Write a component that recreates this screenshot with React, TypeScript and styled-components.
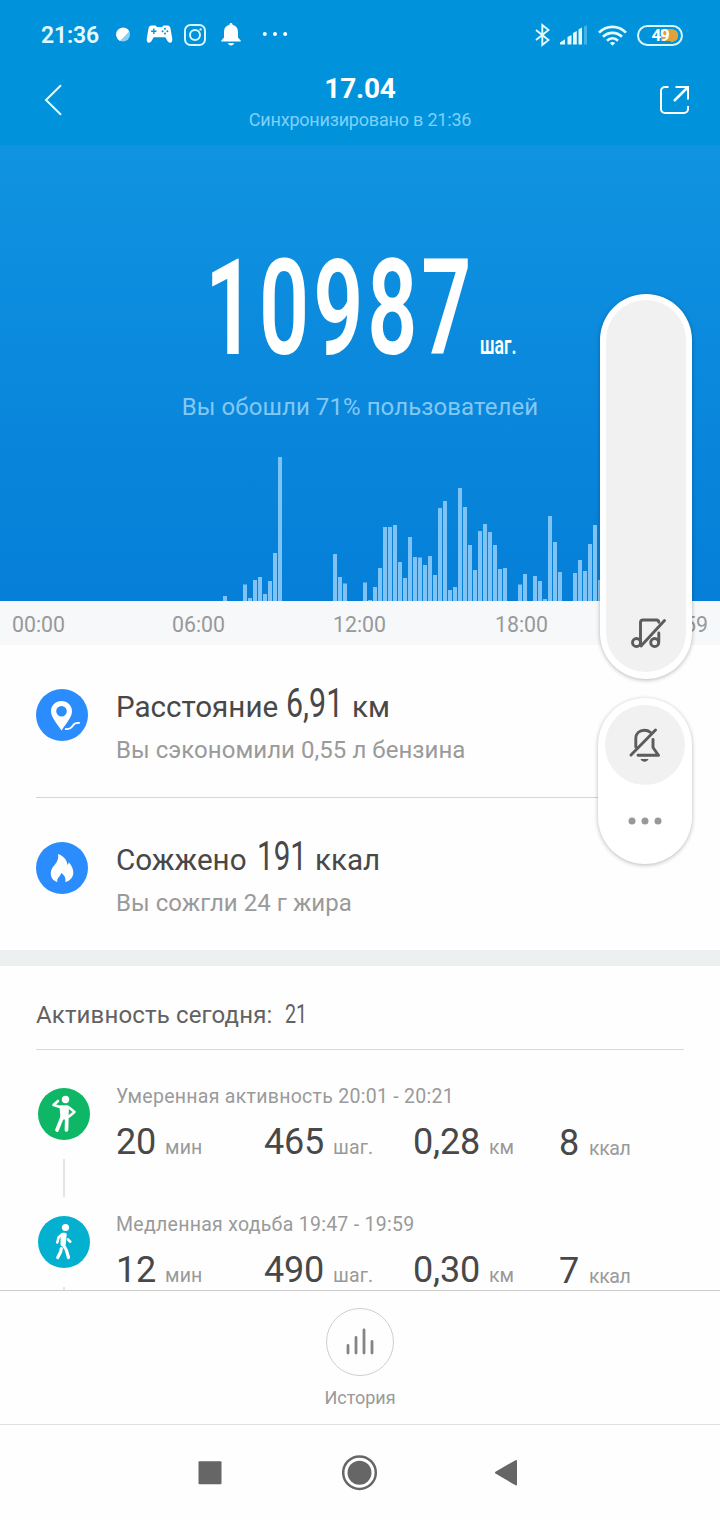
import React from "react";
import styled, { createGlobalStyle } from "styled-components";

const GlobalStyle = createGlobalStyle`
  * { box-sizing: border-box; }
  body { margin: 0; background: #fff; font-family: Roboto, "Noto Sans", sans-serif; }
  svg { display: block; flex: none; }
`;

const Screen = styled.main`
  position: relative;
  display: flex;
  flex-direction: column;
  width: 720px;
  height: 1520px;
  overflow: hidden;
  background: #fefefe;
  white-space: nowrap;
`;

const Header = styled.header`
  flex: none;
  height: 145px;
  background: #0092db;
  color: #fff;
`;

const StatusBar = styled.div`
  display: flex;
  align-items: center;
  height: 70px;
  padding: 0 37px 0 41px;
  color: #e2fbff;
`;

const Clock = styled.span`
  width: 74px;
  padding-top: 1px;
  font-size: 23px;
  font-weight: 600;
  line-height: 30px;
  letter-spacing: -0.2px;
`;

const StatusIcons = styled.div`
  display: grid;
  grid-template-columns: 31px 38px 37px 41px 26px;
  align-items: center;
`;

const SystemIcons = styled.div`
  display: flex;
  align-items: center;
  gap: 10px;
  margin-left: auto;
`;

const TitleBar = styled.div`
  display: flex;
  justify-content: space-between;
  height: 75px;
  padding: 0 30px 0 44px;
`;

const IconButton = styled.button<{ $top: number }>`
  display: flex;
  align-items: flex-start;
  width: 30px;
  padding: ${(p) => p.$top}px 0 0;
  border: 0;
  background: none;
  color: #e2fbff;
`;

const TitleStack = styled.div`
  display: flex;
  flex-direction: column;
  align-items: center;
  padding: 4px 14px 0 0;
`;

const Title = styled.h1`
  margin: 0;
  font-size: 28px;
  font-weight: 700;
  line-height: 30px;
  letter-spacing: -0.2px;
`;

const Synced = styled.p`
  margin: 5px 0 0;
  font-size: 18px;
  line-height: 22px;
  letter-spacing: -0.2px;
  color: #7fd0f8;
`;

const Hero = styled.section`
  display: flex;
  flex-direction: column;
  flex: none;
  height: 456px;
  background: linear-gradient(#1093e1, #057fd8);
`;

const StepRow = styled.div`
  display: flex;
  align-items: baseline;
  height: 247px;
  padding: 84px 0 0 205px;
  color: #fff;
`;

const Condensed = styled.span<{
  $size: number;
  $width: number;
  $scale: number;
  $weight?: number;
  $line: number;
  $tracking?: number;
}>`
  display: inline-block;
  width: ${(p) => p.$width}px;
  font-size: ${(p) => p.$size}px;
  font-weight: ${(p) => p.$weight ?? 400};
  line-height: ${(p) => p.$line}px;
  letter-spacing: ${(p) => p.$tracking ?? 0}px;
  transform: scaleX(${(p) => p.$scale});
  transform-origin: left center;
`;

const Beaten = styled.p`
  margin: 0;
  font-size: 24px;
  line-height: 30px;
  letter-spacing: 0.08px;
  text-align: center;
  color: #83c8f5;
`;

const ChartWrap = styled.div`
  margin-top: auto;
`;

const Axis = styled.div`
  display: grid;
  grid-template-columns: 160px 161px 162px auto;
  flex: none;
  height: 44px;
  padding: 0 12px;
  background: #f6f8fa;
  color: #999;
  font-size: 21.3px;
  line-height: 47px;
`;

const AxisEnd = styled.span`
  display: flex;
  justify-content: space-between;
`;

const Summary = styled.section`
  flex: none;
  height: 321px;
  padding-left: 36px;
  padding-right: 36px;
  border-bottom: 16px solid #ecf0f1;
`;

const SummaryRow = styled.div<{ $divider?: boolean }>`
  display: flex;
  gap: 28px;
  height: 153px;
  padding-top: 41px;
  border-bottom: ${(p) => (p.$divider ? "1px solid #d6d6d6" : "0")};
`;

const SummaryIcon = styled.div`
  padding-top: 3px;
`;

const SummaryTitle = styled.div`
  display: flex;
  align-items: baseline;
  height: 36px;
  font-size: 29.6px;
  line-height: 36px;
  color: #484848;
`;

const Word = styled.span<{ $width: number }>`
  width: ${(p) => p.$width}px;
`;

const SummaryNote = styled.div`
  margin-top: 13px;
  font-size: 24px;
  line-height: 30px;
  color: #9a9a9a;
  letter-spacing: 0.05px;
`;

const Disc = styled.div<{ $color: string }>`
  flex: none;
  width: 52px;
  height: 52px;
  border-radius: 50%;
  background: ${(p) => p.$color};
`;

const Activity = styled.section`
  flex: 1;
  min-height: 0;
  overflow: hidden;
  padding: 0 36px;
`;

const ActivityTitle = styled.h2`
  display: flex;
  align-items: baseline;
  height: 84px;
  margin: 0;
  padding-top: 33px;
  border-bottom: 1px solid #d8d8d8;
  font-size: 24px;
  font-weight: 400;
  line-height: 30px;
  letter-spacing: 0.15px;
  color: #626262;
`;

const ActivityList = styled.div`
  padding: 38px 0 0 2px;
`;

const ActivityItem = styled.article`
  display: flex;
  gap: 26px;
  height: 128px;
`;

const Timeline = styled.div`
  display: flex;
  flex-direction: column;
  align-items: center;
  gap: 19px;
`;

const Connector = styled.span`
  width: 2px;
  height: 38px;
  background: #e4e4e4;
`;

const ActivityName = styled.div`
  font-size: 19.5px;
  line-height: 18px;
  letter-spacing: 0.28px;
  color: #9a9a9a;
`;

const Stats = styled.div`
  display: grid;
  grid-template-columns: 148px 149px 146px 100px;
  margin-top: 21px;
`;

const Stat = styled.div<{ $last?: boolean }>`
  display: flex;
  align-items: baseline;
  gap: ${(p) => (p.$last ? 10 : 9)}px;
  margin-top: ${(p) => (p.$last ? 1 : 0)}px;
  line-height: 30px;
`;

const StatValue = styled.span`
  font-size: 36px;
  letter-spacing: -0.2px;
  color: #484848;
`;

const StatUnit = styled.span<{ $last?: boolean }>`
  font-size: 19.5px;
  letter-spacing: ${(p) => (p.$last ? -0.4 : 0.1)}px;
  color: #999;
`;

const HistoryBar = styled.footer`
  display: flex;
  flex-direction: column;
  align-items: center;
  flex: none;
  height: 134px;
  padding-top: 17px;
  border-top: 1px solid #cbcbcb;
`;

const HistoryButton = styled.button`
  display: flex;
  align-items: center;
  justify-content: center;
  width: 68px;
  height: 68px;
  padding: 0;
  border: 1px solid #cfcfcf;
  border-radius: 50%;
  background: none;
`;

const HistoryLabel = styled.span`
  margin-top: 11px;
  font-size: 18px;
  line-height: 22px;
  color: #999;
`;

const NavBar = styled.nav`
  display: grid;
  grid-template-columns: 144px 152px 24px;
  align-items: center;
  flex: none;
  height: 96px;
  padding-left: 198px;
  border-top: 1px solid #e0e0e0;
`;

const VolumeOverlay = styled.aside`
  position: absolute;
  top: 294px;
  right: 28px;
  display: flex;
  flex-direction: column;
  align-items: flex-end;
  gap: 19px;
`;

const VolumeSlider = styled.div`
  display: flex;
  align-items: flex-end;
  justify-content: center;
  width: 92px;
  height: 385px;
  padding: 0 0 22px 5px;
  border: 6px solid #fff;
  border-bottom-width: 7px;
  border-radius: 46px;
  background: #f1f1f1;
  box-shadow: 0 1px 4px rgba(0, 0, 0, 0.28);
`;

const VolumeMenu = styled.div`
  display: flex;
  flex-direction: column;
  align-items: center;
  width: 94px;
  height: 166px;
  padding-top: 7px;
  border-radius: 47px;
  background: #fff;
  box-shadow: 0 1px 4px rgba(0, 0, 0, 0.28);
`;

const MuteButton = styled.div`
  display: flex;
  align-items: center;
  justify-content: center;
  width: 80px;
  height: 80px;
  border-radius: 50%;
  background: #f1f1f1;
`;

const MoreDots = styled.div`
  margin-top: 32px;
`;

// Steps per five-pixel time slot, as bar heights; zero marks an idle slot.
const bars = [
  5, 0, 0, 0, 16.5, 3, 21, 24, 7, 20, 48, 144, 0, 0, 0, 0, 0, 0, 0, 0, 0, 0, 47, 24, 17.5, 0, 0, 0, 18.5, 1, 14, 33,
  74, 74, 76, 39, 23, 64, 44, 43.5, 36, 45, 26, 93, 100, 11, 14, 113, 94, 56, 31, 70, 77, 69, 56, 32, 33, 0, 0, 16.5,
  27, 0, 25, 20, 2, 85, 59, 29, 0, 0, 28, 41, 30, 57, 76, 21,
];

const StepsChart = () => (
  <svg width="720" height="144" viewBox="0 0 720 144" fill="#7fc3f4">
    {bars.map((h, i) => (h > 0 ? <rect key={i} x={223 + i * 5} y={144 - h} width="4" height={h} /> : null))}
  </svg>
);

const BallIcon = () => (
  <svg width="16" height="16" viewBox="0 0 16 16">
    <circle cx="8" cy="7.500" r="7" fill="#8ccdf5" />
    <path d="M14.300 4.200 5 13.900A7 7 0 1 1 14.300 4.200Z" fill="#fff" />
  </svg>
);

const GamepadIcon = () => (
  <svg width="27" height="20" viewBox="0 0 27 20">
    <path
      d="M5.500.5h4L11 2h5L17.500.5h4c2 0 2.700 1.200 3.100 3.500l1.600 9.500c.4 2.600-.4 4.200-2 4.200-1.800 0-2.600-1.400-3.700-3.400l-1.200-2.100H7.700l-1.200 2.100c-1.100 2-1.900 3.400-3.700 3.400-1.600 0-2.400-1.600-2-4.200L2.400 4C2.800 1.700 3.500.5 5.500.5Z"
      fill="#fff"
    />
    <path d="M7.800 3.500v5.400M5.100 6.200h5.400" stroke="#0092db" strokeWidth="1.400" />
    <g fill="#0092db">
      <circle cx="19" cy="3.800" r="1" />
      <circle cx="19" cy="8.600" r="1" />
      <circle cx="16.600" cy="6.200" r="1" />
      <circle cx="21.400" cy="6.200" r="1" />
    </g>
  </svg>
);

const CameraIcon = () => (
  <svg width="22" height="23" viewBox="0 0 22 23" fill="none" stroke="#d9f7ff" strokeWidth="2">
    <rect x="1" y="1" width="20" height="20" rx="5.500" />
    <circle cx="11" cy="11" r="5" />
    <circle cx="16.600" cy="5.400" r="1.200" fill="#d9f7ff" stroke="none" />
  </svg>
);

const BellIcon = () => (
  <svg width="20" height="24" viewBox="0 0 20 24" fill="#fff">
    <path d="M10 0c1 0 1.500.7 1.500 1.700C15 2.500 17 5.200 17 9v5.500l2.700 2.900V18.500H.3v-1.100L3 14.500V9c0-3.800 2-6.500 5.500-7.300C8.500.7 9 0 10 0Z" />
    <path d="M7 20h6c-.3 1.500-1.400 2.400-3 2.400S7.300 21.500 7 20Z" />
  </svg>
);

const EllipsisIcon = () => (
  <svg width="26" height="6" viewBox="0 0 26 6" fill="#fff">
    <circle cx="2.800" cy="2" r="2" />
    <circle cx="13" cy="2" r="2" />
    <circle cx="23.200" cy="2" r="2" />
  </svg>
);

const BluetoothIcon = () => (
  <svg width="15" height="24" viewBox="0 0 15 24" fill="none" stroke="#e2fbff" strokeWidth="1.900">
    <path d="M1 7l12.500 10L7.300 22V2l6.200 5L1 17" />
  </svg>
);

const SignalIcon = () => (
  <svg width="28" height="20" viewBox="0 0 28 20" fill="#e2fbff">
    <path d="M0 19.500v-2l5-3.200v5.200z" />
    <path d="M7.500 19.500V12l4-2v9.500zM13 19.500V8l3.800-2v13.500zM18.500 19.500V4.500l3.500-2v17z" />
    <path d="M24 19.500V1.500L27 0v19.500z" opacity=".3" />
  </svg>
);

const WifiIcon = () => (
  <svg width="29" height="21" viewBox="0 0 29 21" fill="none" stroke="#e2fbff" strokeWidth="2.700">
    <path d="M1 7.600c7.700-7.600 19.300-7.600 27 0M5 11.700c5.400-5.200 13.600-5.200 19 0M9 15.700c3.300-3 7.700-3 11 0" />
    <path d="m11.800 18 2.700 2.800 2.700-2.800c-1.500-1.300-3.900-1.300-5.400 0Z" fill="#e2fbff" stroke="none" />
  </svg>
);

const BatteryShell = styled.div`
  display: flex;
  align-items: center;
  justify-content: center;
  width: 46px;
  height: 21px;
  border: 2px solid #d9f7ff;
  border-radius: 11px;
  background: radial-gradient(circle at 33px 8.5px, #dda23c 6px, transparent 6.5px),
    linear-gradient(#dda23c, #dda23c) 22px center / 11px 12px no-repeat;
  color: #fff;
  font-size: 17px;
  font-weight: 700;
  letter-spacing: -1.2px;
`;

const BackIcon = () => (
  <svg width="18" height="32" viewBox="0 0 18 32" fill="none" stroke="currentColor" strokeWidth="2">
    <path d="M17 1.200 2 16l15 14.800" />
  </svg>
);

const ShareIcon = () => (
  <svg width="30" height="30" viewBox="0 0 30 30" fill="none" stroke="#fff" strokeWidth="2">
    <path d="M8.500 2H5a4 4 0 0 0-4 4v18a4 4 0 0 0 4 4h19a4 4 0 0 0 4-4v-3" />
    <path d="M15.500 2H28v12.500" />
    <path d="M27.500 2.500 14 16" strokeWidth="2.500" />
  </svg>
);

const PinIcon = () => (
  <svg width="52" height="52" viewBox="0 0 52 52" fill="#fff">
    <path
      fillRule="evenodd"
      d="M25.500 12C19.500 12 15 16.500 15 22.200c0 6 5.600 11.800 10.500 19.300C30.400 34 36 28.200 36 22.200 36 16.500 31.500 12 25.500 12Zm0 5a5.300 5.300 0 1 1 0 10.600 5.300 5.300 0 0 1 0-10.600Z"
    />
    <path d="M29 40c4 .5 6-.5 7.700-3.300 1.500-2.300 3.500-3.200 7-2.700" fill="none" stroke="#fff" strokeWidth="1.800" />
  </svg>
);

const FlameIcon = () => (
  <svg width="52" height="52" viewBox="0 0 52 52" fill="#fff">
    <path d="M22 12c5.500 2 9 5.700 9.400 11 .9-.8 1.300-1.800 1.300-3 3 3.500 4.600 7 4.600 10.500 0 4.700-3 8.200-8 9.500 .8-4-.8-6.800-4.300-9-.3 2.300-1.400 3-2.500 4.400-1.300 1.500-1.600 3-1 4.600-4.300-1.200-6.700-4.200-6.700-8.500 0-5 3.300-7.500 5.300-10.500 2-3 2.500-5.700 1.900-9Z" />
  </svg>
);

const StandingIcon = () => (
  <svg width="52" height="52" viewBox="0 0 52 52" fill="none" stroke="#fff" strokeLinecap="round" strokeLinejoin="round">
    <circle cx="27.500" cy="11.500" r="3.700" fill="#fff" stroke="none" />
    <path d="M20 13 15.500 17 23 19.200" strokeWidth="2.600" />
    <path d="M23 18.700h6.500L29 30h-5z" fill="#fff" strokeWidth="3" />
    <path d="M31 19.500l5.500 4.500-5.500 4.500" strokeWidth="2.600" />
    <path d="M24 29.500 19 42M28.800 29.500 28.500 42" strokeWidth="3.700" />
  </svg>
);

const WalkingIcon = () => (
  <svg width="52" height="52" viewBox="0 0 52 52" fill="none" stroke="#fff" strokeLinecap="round" strokeLinejoin="round">
    <circle cx="27.500" cy="11.500" r="3.600" fill="#fff" stroke="none" />
    <path d="M24 18.500 20.500 21.500 19.300 26.500" strokeWidth="2.600" />
    <path d="M24.300 18.500h2.700L26 28.500h-1.800z" fill="#fff" strokeWidth="3.400" />
    <path d="M30 23.500 32.300 25.700" strokeWidth="2.600" />
    <path d="M24.700 28 28.300 34 30.500 41.500M23.300 32.500 22.600 36 19.700 41.500" strokeWidth="3.200" />
  </svg>
);

const HistoryIcon = () => (
  <svg width="30" height="28" viewBox="0 0 30 28" stroke="#858585" strokeWidth="2.800" strokeLinecap="round">
    <path d="M3 25v-7.500M11 25V9.500M19 25V2M27 25V13.500" />
  </svg>
);

const MusicOffIcon = () => (
  <svg width="38" height="34" viewBox="0 0 38 34" fill="none" stroke="#5c5c5c" strokeWidth="2.900" strokeLinecap="round">
    <circle cx="6.500" cy="26.500" r="4" />
    <circle cx="24.700" cy="26.500" r="4" />
    <path d="M10.500 26.500V6.500a2.500 2.500 0 0 1 2.500-2.500h13.500a2.500 2.500 0 0 1 2.300 2.200M28.800 26V17M11 30 34.500 4.500" />
  </svg>
);

const BellOffIcon = () => (
  <svg width="32" height="36" viewBox="0 0 32 36" fill="none" stroke="#5c5c5c" strokeWidth="2.900" strokeLinecap="round">
    <path d="M6.800 20V11.500c0-5 3.500-8.300 8.600-8.300 2.300 0 4.300.6 5.800 2M24 12.500v8L29.500 28.300H9M2 28 26.500 3" strokeLinejoin="round" />
    <path d="M11.500 32h8c-.8 1.800-2.200 2.800-4 2.800s-3.200-1-4-2.800Z" fill="#5c5c5c" stroke="none" />
  </svg>
);

const DotsIcon = () => (
  <svg width="34" height="8" viewBox="0 0 34 8" fill="#999">
    <circle cx="4" cy="4" r="3.500" />
    <circle cx="17" cy="4" r="3.500" />
    <circle cx="30" cy="4" r="3.500" />
  </svg>
);

const RecentsIcon = () => (
  <svg width="24" height="24" viewBox="0 0 24 24">
    <rect x=".5" y=".2" width="23" height="23" rx="1" fill="#666" />
  </svg>
);

const HomeIcon = () => (
  <svg width="36" height="36" viewBox="0 0 36 36">
    <circle cx="17.500" cy="17.700" r="16.300" fill="none" stroke="#666" strokeWidth="2.500" />
    <circle cx="17.500" cy="17.700" r="12" fill="#666" />
  </svg>
);

const NavBackIcon = () => (
  <svg width="24" height="28" viewBox="0 0 24 28" fill="#666" stroke="#666" strokeWidth="2" strokeLinejoin="round">
    <path d="M22 2v23.500L2 13.700z" />
  </svg>
);

const activities = [
  { name: "Умеренная активность 20:01 - 20:21", color: "#0eb765", icon: <StandingIcon />, values: ["20", "465", "0,28", "8"] },
  { name: "Медленная ходьба 19:47 - 19:59", color: "#04b0cf", icon: <WalkingIcon />, values: ["12", "490", "0,30", "7"] },
];
const units = ["мин", "шаг.", "км", "ккал"];

export default function App() {
  return (
    <Screen>
      <GlobalStyle />
      <Header>
        <StatusBar>
          <Clock>21:36</Clock>
          <StatusIcons>
            <BallIcon />
            <GamepadIcon />
            <CameraIcon />
            <BellIcon />
            <EllipsisIcon />
          </StatusIcons>
          <SystemIcons>
            <BluetoothIcon />
            <SignalIcon />
            <WifiIcon />
            <BatteryShell>49</BatteryShell>
          </SystemIcons>
        </StatusBar>
        <TitleBar>
          <IconButton $top={14}><BackIcon /></IconButton>
          <TitleStack>
            <Title>17.04</Title>
            <Synced>Синхронизировано в 21:36</Synced>
          </TitleStack>
          <IconButton $top={15}><ShareIcon /></IconButton>
        </TitleBar>
      </Header>

      <Hero>
        <StepRow>
          <Condensed $size={134} $width={275} $scale={0.655} $weight={600} $line={160} $tracking={6}>10987</Condensed>
          <Condensed $size={26} $width={40} $scale={0.68} $weight={600} $line={30}>шаг.</Condensed>
        </StepRow>
        <Beaten>Вы обошли 71% пользователей</Beaten>
        <ChartWrap><StepsChart /></ChartWrap>
      </Hero>

      <Axis>
        <span>00:00</span>
        <span>06:00</span>
        <span>12:00</span>
        <AxisEnd>
          <span>18:00</span>
          <span>23:59</span>
        </AxisEnd>
      </Axis>

      <Summary>
        <SummaryRow $divider>
          <SummaryIcon><Disc $color="#2a8cfd"><PinIcon /></Disc></SummaryIcon>
          <div>
            <SummaryTitle>
              <Word $width={170}>Расстояние</Word>
              <Condensed $size={40} $width={66} $scale={0.76} $weight={450} $line={36}>6,91</Condensed>
              <span>км</span>
            </SummaryTitle>
            <SummaryNote>Вы сэкономили 0,55 л бензина</SummaryNote>
          </div>
        </SummaryRow>
        <SummaryRow>
          <SummaryIcon><Disc $color="#2a8cfd"><FlameIcon /></Disc></SummaryIcon>
          <div>
            <SummaryTitle>
              <Word $width={141}>Сожжено</Word>
              <Condensed $size={40} $width={58} $scale={0.74} $weight={450} $line={36}>191</Condensed>
              <span>ккал</span>
            </SummaryTitle>
            <SummaryNote>Вы сожгли 24 г жира</SummaryNote>
          </div>
        </SummaryRow>
      </Summary>

      <Activity>
        <ActivityTitle>
          <Word $width={249}>Активность сегодня:</Word>
          <Condensed $size={26} $width={30} $scale={0.76} $line={30}>21</Condensed>
        </ActivityTitle>
        <ActivityList>
          {activities.map((a) => (
            <ActivityItem key={a.name}>
              <Timeline>
                <Disc $color={a.color}>{a.icon}</Disc>
                <Connector />
              </Timeline>
              <div>
                <ActivityName>{a.name}</ActivityName>
                <Stats>
                  {a.values.map((v, i) => (
                    <Stat key={units[i]} $last={i === 3}>
                      <StatValue>{v}</StatValue>
                      <StatUnit $last={i === 3}>{units[i]}</StatUnit>
                    </Stat>
                  ))}
                </Stats>
              </div>
            </ActivityItem>
          ))}
        </ActivityList>
      </Activity>

      <HistoryBar>
        <HistoryButton><HistoryIcon /></HistoryButton>
        <HistoryLabel>История</HistoryLabel>
      </HistoryBar>

      <NavBar>
        <RecentsIcon />
        <HomeIcon />
        <NavBackIcon />
      </NavBar>

      <VolumeOverlay>
        <VolumeSlider><MusicOffIcon /></VolumeSlider>
        <VolumeMenu>
          <MuteButton><BellOffIcon /></MuteButton>
          <MoreDots><DotsIcon /></MoreDots>
        </VolumeMenu>
      </VolumeOverlay>
    </Screen>
  );
}
